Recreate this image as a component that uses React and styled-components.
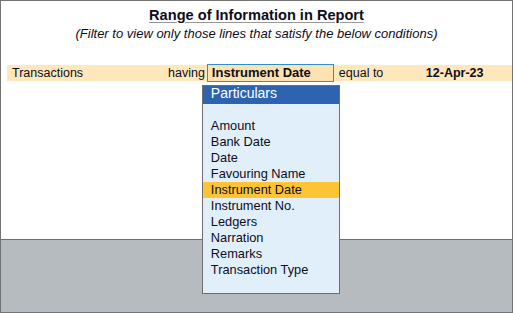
import React from 'react';
import styled, { createGlobalStyle } from 'styled-components';

const GlobalStyle = createGlobalStyle`
  html, body {
    margin: 0;
    padding: 0;
    background: #ffffff;
  }

  body {
    font-family: 'Liberation Sans', Arial, sans-serif;
    color: #0d0d1a;
  }
`;

const Frame = styled.div`
  display: flex;
  flex-direction: column;
  width: 513px;
  height: 313px;
  box-sizing: border-box;
  border: 1px solid #737373;
  background: #ffffff;
  position: relative;
`;

const Body = styled.section`
  flex: 1;
  display: flex;
  flex-direction: column;
  padding-top: 6px;
`;

const Title = styled.h1`
  margin: 0;
  align-self: center;
  font-size: 14.6px;
  line-height: 17px;
  font-weight: 700;
  text-decoration: underline;
  text-decoration-color: #9a9a9a;
  text-underline-offset: 2px;
`;

const Subtitle = styled.p`
  margin: 2px 0 0;
  text-align: center;
  font-size: 13px;
  line-height: 15px;
  font-style: italic;
`;

const FilterRow = styled.div`
  display: flex;
  align-items: center;
  height: 16px;
  margin: 24px 0 0 6px;
  padding-left: 5px;
  background: #fee7ba;
  font-size: 12.5px;
  line-height: 16px;
  white-space: nowrap;
`;

const Cell = styled.span`
  flex: 0 0 auto;
  width: ${({ $w }) => ($w ? `${$w}px` : 'auto')};
  font-weight: ${({ $bold }) => ($bold ? 700 : 400)};
`;

const Field = styled.span`
  position: relative;
  flex: 0 0 auto;
  box-sizing: border-box;
  width: 127px;
  height: 18px;
  margin: 0 5px 0 2px;
  padding-left: 4px;
  border: 1px solid #2b8fd3;
  background: #fee3b0;
  font-size: 13px;
  font-weight: 700;
  line-height: 16px;
`;

const Menu = styled.div`
  position: absolute;
  top: calc(100% + 4px);
  left: -6px;
  z-index: 2;
  width: 138px;
  box-sizing: border-box;
  border: 1px solid #6e6e6e;
  background: #e1effb;
  padding-bottom: 15px;
  font-weight: 400;
`;

const MenuHeader = styled.div`
  height: 18px;
  box-sizing: border-box;
  padding: 0 0 3px 8px;
  background: #2d63af;
  color: #ffffff;
  font-size: 14px;
  line-height: 15px;
`;

const MenuList = styled.ul`
  list-style: none;
  margin: 0;
  padding: 14px 0 0;
`;

const MenuItem = styled.li`
  height: 16px;
  padding-left: 8px;
  font-size: 12.8px;
  line-height: 16px;
  background: ${({ $active }) => ($active ? '#fec434' : 'transparent')};
`;

const Footer = styled.div`
  height: 73px;
  box-sizing: border-box;
  border-top: 1px solid #6e6e6e;
  background: #b6bbbf;
`;

const options = [
  'Amount',
  'Bank Date',
  'Date',
  'Favouring Name',
  'Instrument Date',
  'Instrument No.',
  'Ledgers',
  'Narration',
  'Remarks',
  'Transaction Type',
];

const App = () => {
  const selected = 'Instrument Date';

  return (
    <>
      <GlobalStyle />
      <Frame>
        <Body>
          <Title>Range of Information in Report</Title>
          <Subtitle>(Filter to view only those lines that satisfy the below conditions)</Subtitle>

          <FilterRow>
            <Cell $w={156}>Transactions</Cell>
            <Cell>having</Cell>
            <Field>
              {selected}
              <Menu>
                <MenuHeader>Particulars</MenuHeader>
                <MenuList>
                  {options.map((name) => (
                    <MenuItem key={name} $active={name === selected}>
                      {name}
                    </MenuItem>
                  ))}
                </MenuList>
              </Menu>
            </Field>
            <Cell $w={87}>equal to</Cell>
            <Cell $bold>12-Apr-23</Cell>
          </FilterRow>
        </Body>
        <Footer />
      </Frame>
    </>
  );
};

export default App;
